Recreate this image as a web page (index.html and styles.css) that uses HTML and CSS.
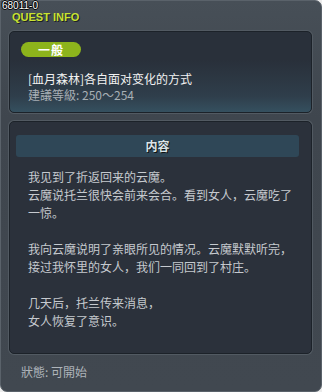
FILE: index.html
```html
<!DOCTYPE html>
<html>
<head>
    <title>Quest Info</title>
    <link rel="stylesheet" href="styles.css">
</head>
<body>
    <div class="window">
        <div class="head">
            <div class="quest-id">68011-0</div>
            <div class="head-title">QUEST INFO</div>
        </div>

        <div class="panel summary">
            <div class="badge">一般</div>
            <div class="quest-name">[血月森林]各自面对变化的方式</div>
            <div class="quest-level">建議等級: 250～254</div>
        </div>

        <div class="panel content">
            <div class="content-bar">内容</div>
            <div class="content-text">
                我见到了折返回来的云魔。<br>
                云魔说托兰很快会前来会合。看到女人，云魔吃了<br>
                一惊。<br>
                <br>
                我向云魔说明了亲眼所见的情况。云魔默默听完，<br>
                接过我怀里的女人，我们一同回到了村庄。<br>
                <br>
                几天后，托兰传来消息，<br>
                女人恢复了意识。
            </div>
        </div>

        <div class="status">狀態: 可開始</div>
    </div>
</body>
</html>
```

FILE: styles.css
```css
body {
    margin: 0;
    background: #ececec;
    font-family: "Noto Sans CJK SC", "Liberation Sans", sans-serif;
    font-size: 12px;
}

.window {
    width: 322px;
    height: 392px;
    box-sizing: border-box;
    padding: 0 9px 0 8px;
    border: 1px solid #5a626a;
    border-radius: 0 7px 7px 7px;
    background: linear-gradient(#474f57, #3f464e 30%, #414850);
    display: flex;
    flex-direction: column;
}

/* Titre */
.head { height: 30px; }
.quest-id {
    margin-left: -7px;
    height: 10px;
    line-height: 10px;
    font-family: "Liberation Sans", sans-serif;
    font-size: 10px;
    color: #fff;
    text-shadow: 1px 0 #000, -1px 0 #000, 0 1px #000, 0 -1px #000;
}
.head-title {
    margin: 1px 0 0 3px;
    line-height: 11px;
    font-family: "Liberation Sans", sans-serif;
    font-size: 11px;
    font-weight: bold;
    color: #c8e232;
    text-shadow: 1px 1px #1c2024;
}

/* Panneaux */
.panel {
    border: 1px solid #1c2229;
    border-radius: 5px;
    box-shadow: 0 0 0 1px #525a62;
}
.summary {
    height: 82px;
    box-sizing: border-box;
    padding: 10px 0 0 11px;
    background: linear-gradient(#29303a 35%, #2f3e4b 80%, #35505f);
}
.badge {
    width: 60px;
    height: 15px;
    line-height: 15px;
    border-radius: 8px;
    background: #8db41c;
    color: #fff;
    font-weight: bold;
    text-align: center;
    letter-spacing: 1px;
}
.quest-name {
    margin-top: 14px;
    padding-left: 7px;
    line-height: 16px;
    color: #f2f2f2;
    white-space: nowrap;
}
.quest-level {
    padding-left: 7px;
    line-height: 16px;
    color: #a8afb5;
}

.content {
    margin-top: 8px;
    height: 233px;
    box-sizing: border-box;
    padding: 13px 12px 0 6px;
    background: #2b313b;
}
.content-bar {
    height: 22px;
    line-height: 22px;
    border-radius: 3px;
    background: #2f4757;
    color: #dbe4e8;
    font-weight: bold;
    text-align: center;
    text-shadow: 1px 1px #111;
}
.content-text {
    margin-top: 11px;
    padding-left: 12px;
    line-height: 18px;
    color: #c6cacf;
    white-space: nowrap;
}

.status {
    margin: 10px 0 0 12px;
    line-height: 16px;
    color: #aeb4ba;
}
```
